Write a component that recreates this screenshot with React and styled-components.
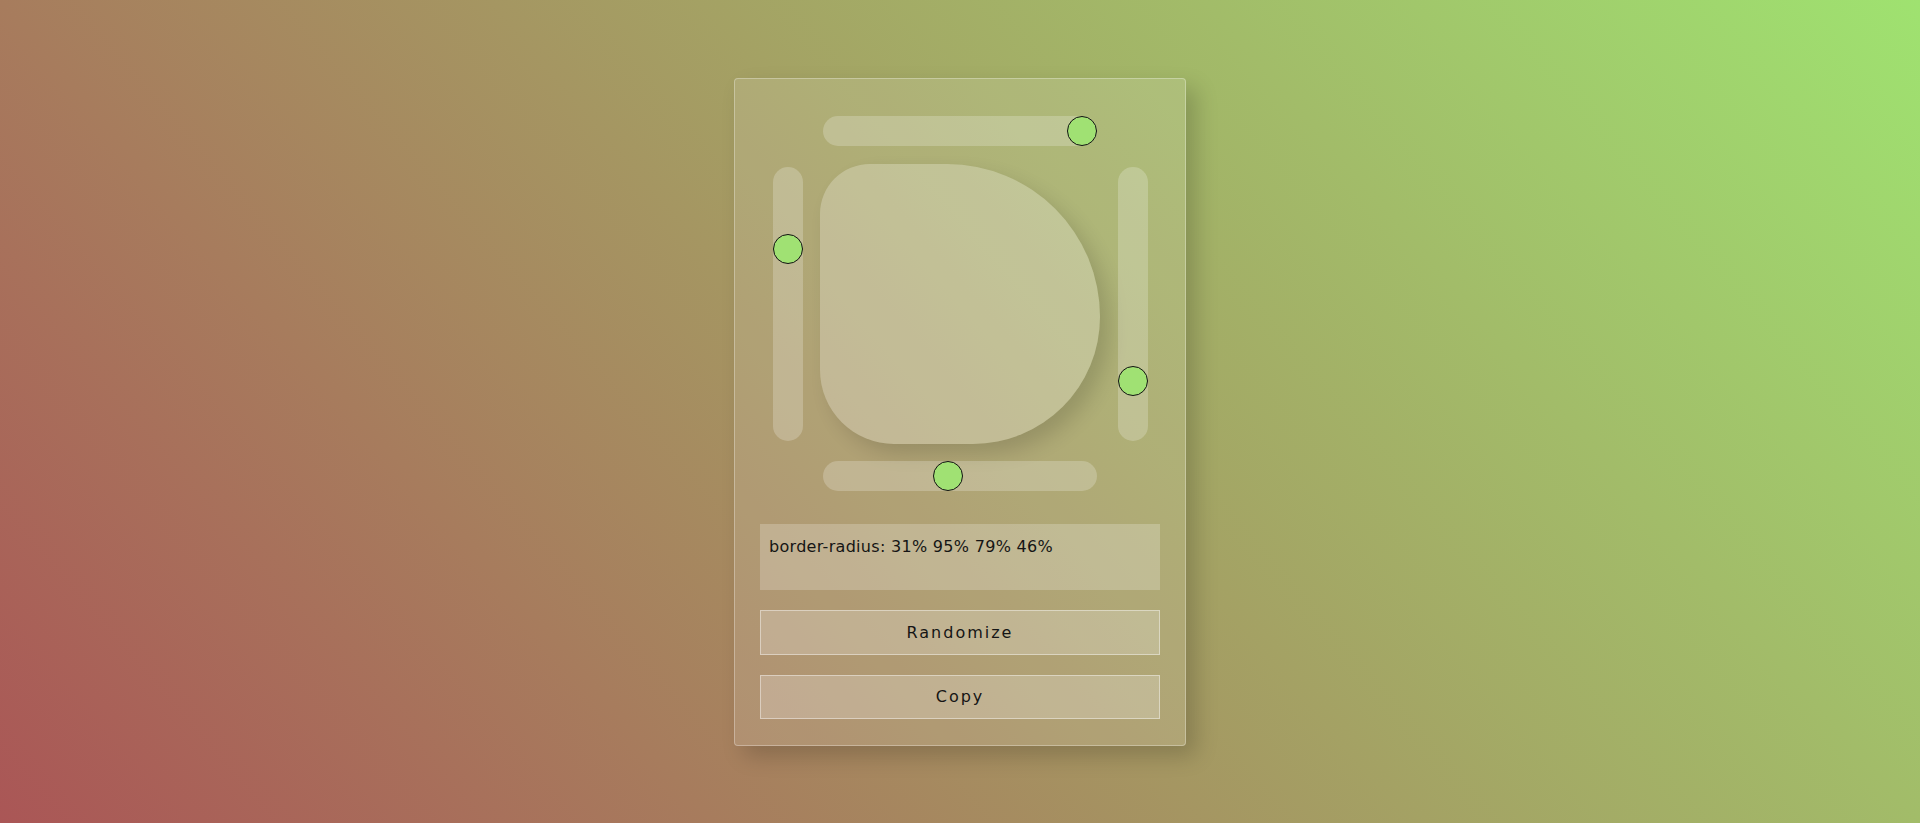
import React from "react";
import styled, { createGlobalStyle } from "styled-components";

const GlobalStyle = createGlobalStyle`
  html, body { margin: 0; padding: 0; }
  body {
    min-height: 100vh;
    background: linear-gradient(49deg, #aa5656 0%, #9fe270 100%);
    font-family: "DejaVu Sans", "Liberation Sans", sans-serif;
  }
  #root { min-height: 100vh; }
`;

const Page = styled.main`
  min-height: 100vh;
  display: flex;
  justify-content: center;
  padding-top: 78px;
  box-sizing: border-box;
`;

const Card = styled.section`
  width: 400px;
  height: fit-content;
  padding: 25px 25px 25.5px;
  display: flex;
  flex-direction: column;
  gap: 20px;
  background: rgba(255, 255, 255, 0.12);
  border: 1px solid rgba(255, 255, 255, 0.3);
  border-radius: 4px;
  box-shadow: 10px 10px 22px rgba(0, 0, 0, 0.18);
`;

const Editor = styled.div`
  display: grid;
  grid-template-columns: 30px 280px 30px;
  grid-template-rows: 30px 280px 30px;
  gap: 17.5px;
  justify-content: center;
  padding: 12px 0 13px;
`;

const Shape = styled.div`
  grid-column: 2;
  grid-row: 2;
  width: 280px;
  height: 280px;
  background: rgba(255, 255, 255, 0.24);
  box-shadow: 10px 10px 20px rgba(0, 0, 0, 0.14);
`;

const Track = styled.div`
  position: relative;
  grid-column: ${(p) => p.$col};
  grid-row: ${(p) => p.$row};
  align-self: center;
  justify-self: center;
  width: ${(p) => (p.$vertical ? "30px" : "274px")};
  height: ${(p) => (p.$vertical ? "274px" : "30px")};
  border-radius: 15px;
  background: rgba(255, 255, 255, 0.22);
`;

const Thumb = styled.span`
  position: absolute;
  box-sizing: border-box;
  width: 30px;
  height: 30px;
  border-radius: 50%;
  background: #a0e173;
  border: 1px solid #111;
  ${(p) => (p.$vertical ? "left: 0;" : "top: 0;")}
`;

const Output = styled.textarea`
  display: block;
  box-sizing: border-box;
  width: 400px;
  height: 66px;
  margin: 0;
  padding: 14px 9px 0;
  resize: none;
  border: none;
  outline: none;
  background: rgba(255, 255, 255, 0.22);
  color: #151515;
  font-family: "DejaVu Sans", "Liberation Sans", sans-serif;
  font-size: 16px;
  letter-spacing: 0.3px;
  line-height: 18px;
`;

const Button = styled.button`
  display: block;
  box-sizing: border-box;
  width: 400px;
  height: 44.5px;
  margin: 0;
  padding: 0;
  background: rgba(255, 255, 255, 0.22);
  border: 1px solid rgba(255, 255, 255, 0.42);
  color: #151515;
  font-family: "DejaVu Sans", "Liberation Sans", sans-serif;
  font-size: 16px;
  letter-spacing: 2px;
  cursor: pointer;
`;

const RANGE = 274 - 30;

function Slider({ col, row, vertical, value }) {
  const offset = (value / 100) * RANGE;
  return (
    <Track $col={col} $row={row} $vertical={vertical}>
      <Thumb
        $vertical={vertical}
        style={vertical ? { top: offset } : { left: offset }}
      />
    </Track>
  );
}

export default function App() {
  const radii = [31, 95, 79, 46];
  const radius = radii.map((r) => r + "%").join(" ");
  return (
    <>
      <GlobalStyle />
      <Page>
        <Card>
          <Editor>
            <Slider col={2} row={1} value={100} />
            <Slider col={1} row={2} vertical value={27.7} />
            <Shape style={{ borderRadius: radius }} />
            <Slider col={3} row={2} vertical value={81.7} />
            <Slider col={2} row={3} value={44.9} />
          </Editor>
          <Output readOnly value={`border-radius: ${radius}`} />
          <Button>Randomize</Button>
          <Button>Copy</Button>
        </Card>
      </Page>
    </>
  );
}
